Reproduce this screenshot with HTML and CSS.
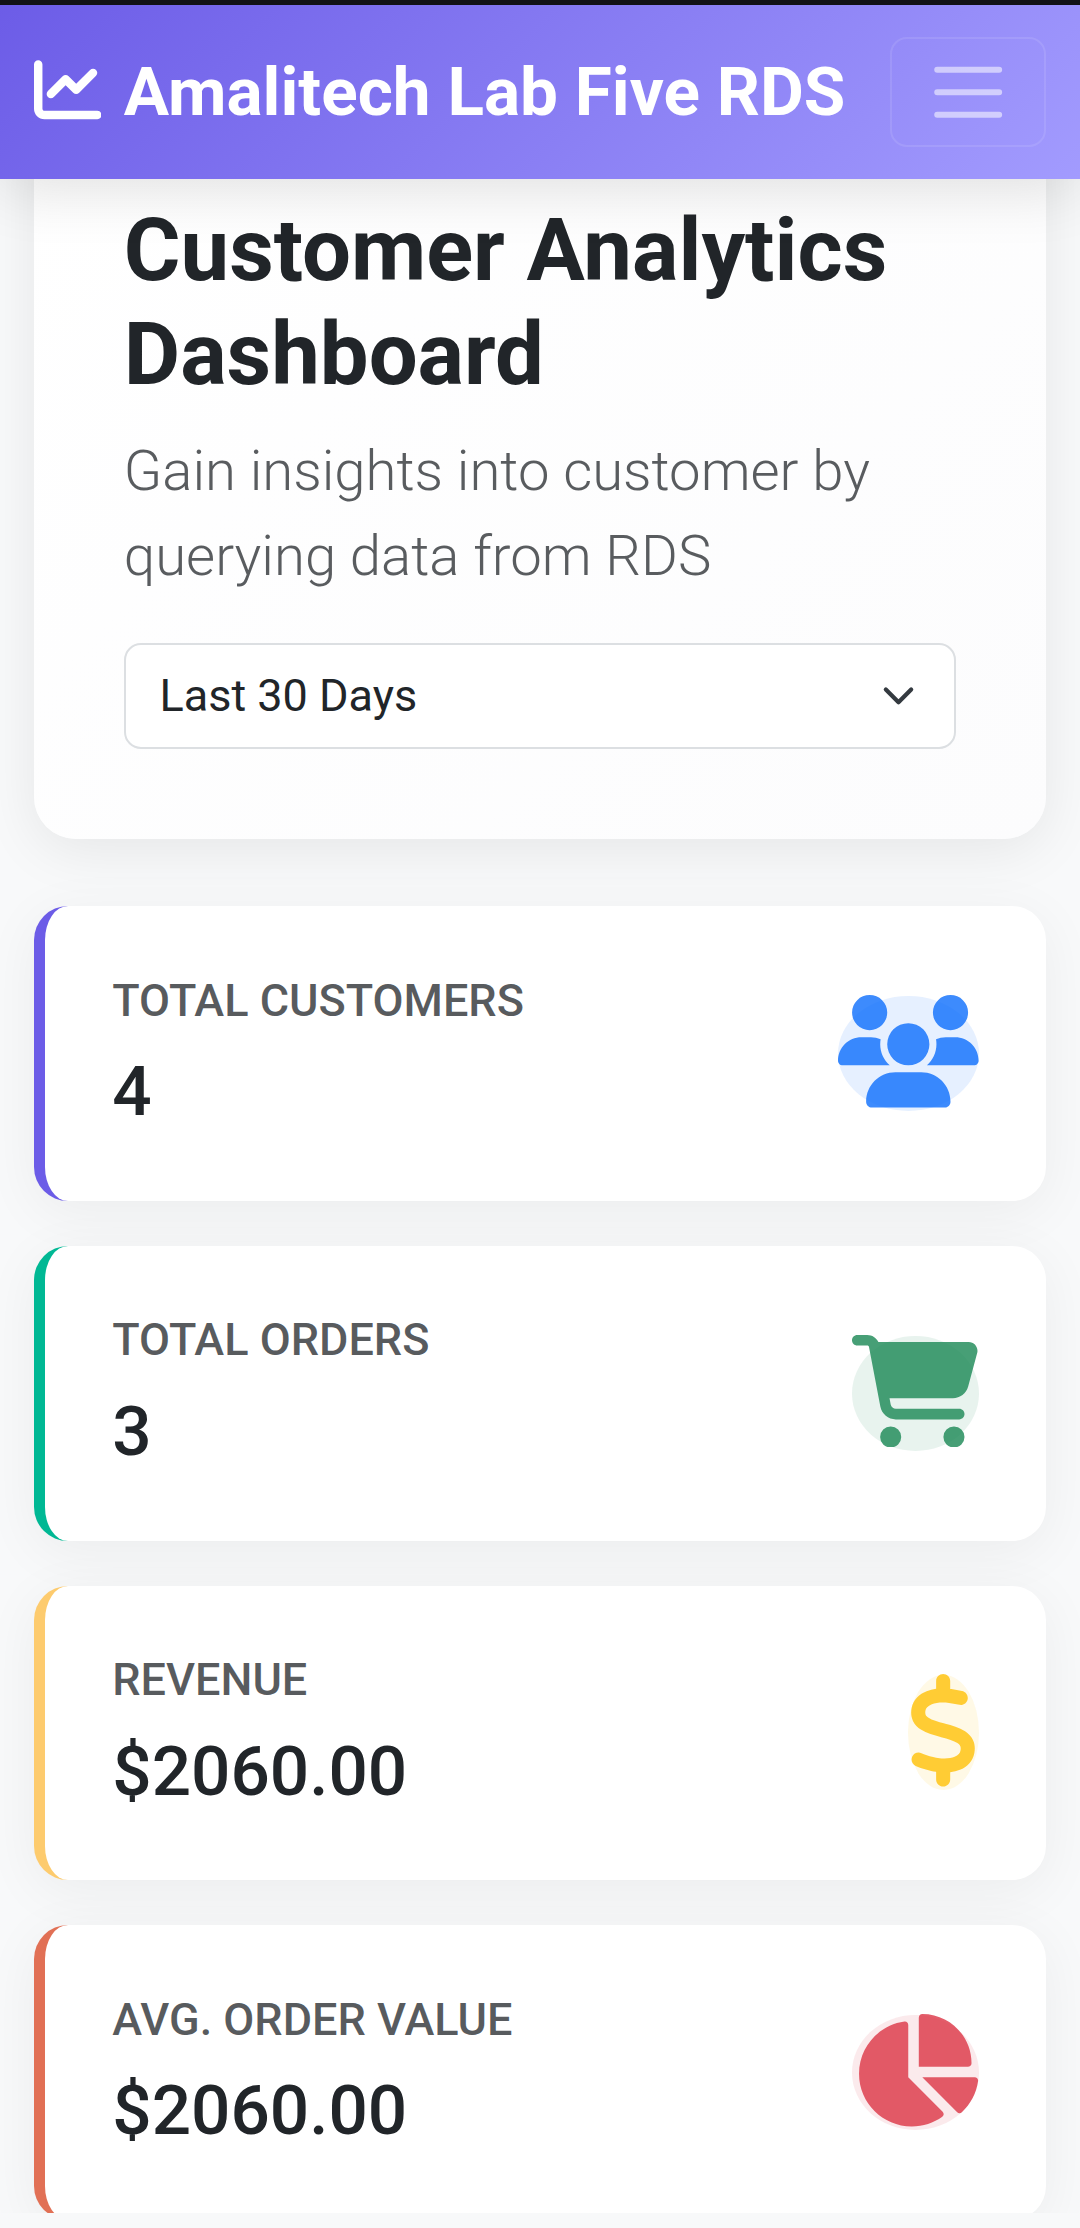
FILE: index.html
```html
<!DOCTYPE html>
<html lang="en">
<head>
<meta charset="utf-8">
<title>Customer Analytics Dashboard</title>
<link rel="stylesheet" href="styles.css">
</head>
<body>
<header class="navbar">
  <a class="brand"><svg class="brand-icon" viewBox="0 0 512 512"><path d="M64 64c0-17.7-14.3-32-32-32S0 46.3 0 64V400c0 44.2 35.8 80 80 80H480c17.7 0 32-14.3 32-32s-14.3-32-32-32H80c-8.8 0-16-7.2-16-16V64zm406.6 86.6c12.5-12.5 12.5-32.8 0-45.3s-32.8-12.5-45.3 0L320 210.7l-57.4-57.4c-12.5-12.5-32.8-12.5-45.3 0l-112 112c-12.5 12.5-12.5 32.8 0 45.3s32.8 12.5 45.3 0L240 221.3l57.4 57.4c12.5 12.5 32.8 12.5 45.3 0l128-128z"/></svg><span>Amalitech Lab Five RDS</span></a>
  <div class="toggler" role="button" aria-label="Menu"><svg viewBox="0 0 30 30"><path d="M4 7h22M4 15h22M4 23h22"/></svg></div>
</header>
<main class="container">
  <section class="hero">
    <h1>Customer Analytics Dashboard</h1>
    <p class="lead">Gain insights into customer by querying data from RDS</p>
    <div class="select"><span>Last 30 Days</span><svg viewBox="0 0 16 16"><path d="m2 5 6 6 6-6"/></svg></div>
  </section>
  <section class="cards">
    <article class="card purple">
      <div><h6>Total Customers</h6><h2>4</h2></div>
      <div class="icon blue"><svg viewBox="0 0 640 512"><path d="M144 160A80 80 0 1 0 144 0a80 80 0 1 0 0 160zm368 0A80 80 0 1 0 512 0a80 80 0 1 0 0 160zM0 298.7C0 310.4 9.6 320 21.3 320H234.7c.2 0 .4 0 .7 0c-26.6-23.5-43.3-57.8-43.3-96c0-7.6 .7-15 1.9-22.3c-13.6-6.3-28.7-9.7-44.6-9.7H106.7C47.8 192 0 239.8 0 298.7zM405.3 320H618.7c11.8 0 21.3-9.6 21.3-21.3C640 239.8 592.2 192 533.3 192H490.7c-15.9 0-31 3.5-44.6 9.7c1.3 7.2 1.9 14.7 1.9 22.3c0 38.2-16.8 72.5-43.3 96c.2 0 .4 0 .7 0zM224 224a96 96 0 1 1 192 0 96 96 0 1 1-192 0zM128 485.3C128 411.7 187.7 352 261.3 352H378.7C452.3 352 512 411.7 512 485.3c0 14.7-11.9 26.7-26.7 26.7H154.7c-14.7 0-26.7-11.9-26.7-26.7z"/></svg></div>
    </article>
    <article class="card teal">
      <div><h6>Total Orders</h6><h2>3</h2></div>
      <div class="icon green"><svg viewBox="0 0 576 512"><path d="M0 24C0 10.7 10.7 0 24 0H69.5c22 0 41.5 12.8 50.6 32h411c26.3 0 45.5 25 38.6 50.4l-41 152.3c-8.5 31.4-37 53.3-69.5 53.3H170.7l5.4 28.5c2.2 11.3 12.1 19.5 23.6 19.5H488c13.3 0 24 10.7 24 24s-10.7 24-24 24H199.7c-34.6 0-64.3-24.6-70.7-58.5L77.4 54.5c-.7-3.8-4-6.5-7.9-6.5H24C10.7 48 0 37.3 0 24zM128 464a48 48 0 1 1 96 0 48 48 0 1 1-96 0zm336-48a48 48 0 1 1 0 96 48 48 0 1 1 0-96z"/></svg></div>
    </article>
    <article class="card amber">
      <div><h6>Revenue</h6><h2>$2060.00</h2></div>
      <div class="icon yellow"><svg viewBox="0 0 320 512"><path d="M160 0c17.7 0 32 14.3 32 32V67.7c1.6 .2 3.1 .4 4.7 .7c.4 .1 .7 .1 1.1 .2l48 8.8c17.4 3.2 28.9 19.9 25.7 37.2s-19.9 28.9-37.2 25.7l-47.5-8.7c-31.3-4.6-58.9-1.5-78.3 6.2s-27.2 18.3-29 28.1c-2 10.7-.5 16.7 1.2 20.4c1.8 3.9 5.5 8.3 12.8 13.2c16.3 10.7 41.3 17.7 73.7 26.3l2.9 .8c28.6 7.6 63.6 16.8 89.6 33.8c14.2 9.3 27.6 21.9 35.9 39.5c8.5 17.9 10.3 37.9 6.4 59.2c-6.9 38-33.1 63.4-65.6 76.7c-13.7 5.6-28.6 9.2-44.4 11V480c0 17.7-14.3 32-32 32s-32-14.3-32-32V445.1c-.4-.1-.9-.1-1.3-.2l-.2 0 0 0c-24.4-3.8-64.5-14.3-91.5-26.3c-16.1-7.2-23.4-26.1-16.2-42.2s26.1-23.4 42.2-16.2c20.9 9.3 55.3 18.5 75.2 21.6c31.9 4.7 58.2 2 76-5.3c16.9-6.9 24.6-16.9 26.8-28.9c1.9-10.6 .4-16.7-1.3-20.4c-1.9-4-5.6-8.4-13-13.3c-16.4-10.7-41.5-17.7-74-26.3l-2.8-.7 0 0C119.4 279.3 84.4 270 58.4 253c-14.2-9.3-27.5-22-35.8-39.6c-8.4-17.9-10.1-37.9-6.1-59.2C23.7 116 52.3 91.2 84.8 78.3c13.3-5.3 27.9-8.9 43.2-11V32c0-17.7 14.3-32 32-32z"/></svg></div>
    </article>
    <article class="card coral">
      <div><h6>Avg. Order Value</h6><h2>$2060.00</h2></div>
      <div class="icon red"><svg viewBox="0 0 576 512"><path d="M304 240V16.6c0-9 7-16.6 16-16.6C443.7 0 544 100.3 544 224c0 9-7.6 16-16.6 16H304zM32 272C32 150.7 122.1 50.3 239 34.3c9.2-1.3 17 6.1 17 15.4V288L412.5 444.5c6.7 6.7 6.2 17.7-1.5 23.1C371.8 495.6 323.8 512 272 512C139.5 512 32 404.6 32 272zm526.4 16c9.3 0 16.6 7.8 15.4 17c-7.7 55.9-34.6 105.6-73.9 142.3c-6 5.6-15.4 5.2-21.2-.7L320 288H558.4z"/></svg></div>
    </article>
  </section>
</main>
<div class="bottom-strip"></div>
</body>
</html>
```
FILE: styles.css
```css
html {
  font-size: 45px;
  overflow: hidden;
}

* {
  box-sizing: border-box;
}

body {
  margin: 0;
  height: 2228px;
  overflow: hidden;
  background: #f8f9fa;
  color: #212529;
  font-family: Roboto, "Liberation Sans", sans-serif;
  font-size: 1rem;
  line-height: 1.5;
}

h1, h2, h6, p {
  margin: 0;
}

.navbar {
  position: fixed;
  inset: 0 0 auto;
  z-index: 10;
  height: 179px;
  padding: 0 0.75rem;
  border-top: 5px solid #121216;
  display: flex;
  align-items: center;
  justify-content: space-between;
  background: linear-gradient(135deg, #6c5ce7, #a29bfe) border-box;
  box-shadow: 0 11px 56px rgba(0, 0, 0, 0.12);
}

.brand {
  display: flex;
  align-items: center;
  gap: 0.5rem;
  color: #fff;
  font-size: 1.5rem;
  font-weight: 700;
  white-space: nowrap;
}

.brand-icon {
  width: 1em;
  height: 1em;
  margin-bottom: 5px;
  fill: currentColor;
}

.toggler {
  padding: 0.25rem 0.75rem;
  border: 2px solid rgba(255, 255, 255, 0.1);
  border-radius: 17px;
}

.toggler svg {
  display: block;
  width: 1.875rem;
  height: 1.875rem;
  fill: none;
  stroke: rgba(255, 255, 255, 0.55);
  stroke-width: 2.15;
  stroke-linecap: round;
}

.container {
  padding: 108px 0.75rem 0;
}

.hero {
  padding: 2rem;
  margin-bottom: 1.5rem;
  border-radius: 42px;
  background: linear-gradient(135deg, #fff, #fcfcfd);
  box-shadow: 0 11px 56px rgba(0, 0, 0, 0.08);
}

.hero h1 {
  margin-bottom: 23px;
  font-size: 86.8px;
  font-weight: 700;
  line-height: 1.2;
}

.lead {
  margin-bottom: 1rem;
  color: rgba(33, 37, 41, 0.75);
  font-size: 1.25rem;
  font-weight: 300;
}

.select {
  display: flex;
  align-items: center;
  justify-content: space-between;
  height: 105.7px;
  padding: 0 0.75rem;
  border: 2px solid #dcdfe2;
  border-radius: 17px;
  background: #fff;
}

.select svg {
  width: 1rem;
  height: 0.75rem;
  fill: none;
  stroke: #343a40;
  stroke-width: 2;
  stroke-linecap: round;
  stroke-linejoin: round;
}

.cards {
  display: flex;
  flex-direction: column;
  gap: 1rem;
}

.card {
  display: flex;
  align-items: center;
  justify-content: space-between;
  padding: 1.5rem;
  border-left: 11px solid;
  border-radius: 34px;
  background: #fff;
  box-shadow: 0 11px 56px rgba(0, 0, 0, 0.055);
}

.purple { border-color: #6c5ce7; }
.teal { border-color: #00b894; }
.amber { border-color: #fdcb6e; }
.coral { border-color: #e17055; }

.card h6 {
  margin-bottom: 0.5rem;
  color: rgba(33, 37, 41, 0.75);
  font-size: 1rem;
  font-weight: 500;
  line-height: 1.2;
  text-transform: uppercase;
}

.card h2 {
  font-size: 69.3px;
  font-weight: 500;
  line-height: 1.2;
}

.icon {
  height: 115px;
  border-radius: 50%;
}

.icon svg {
  display: block;
  height: 2.5rem;
  margin-top: -1px;
  fill: currentColor;
}

.blue { color: rgba(13, 110, 253, 0.8); background: rgba(13, 110, 253, 0.1); }
.green { color: rgba(25, 135, 84, 0.8); background: rgba(25, 135, 84, 0.1); }
.yellow { color: rgba(255, 193, 7, 0.8); background: rgba(255, 193, 7, 0.1); }
.red { color: rgba(220, 53, 69, 0.8); background: rgba(220, 53, 69, 0.1); }

.bottom-strip {
  position: fixed;
  inset: auto 0 0;
  height: 15px;
  background: #f8f9fa;
}
```
